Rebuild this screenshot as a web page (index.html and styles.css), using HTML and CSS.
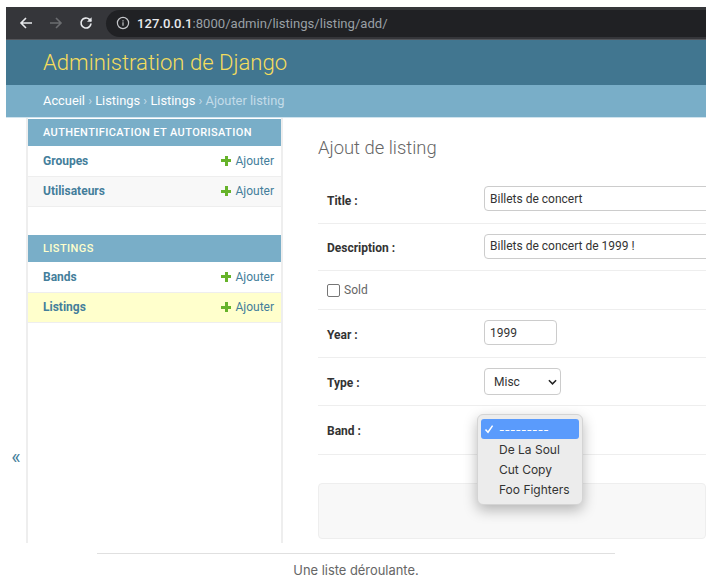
FILE: index.html
```html
<!DOCTYPE html>
<html lang="fr">
<head>
    <meta charset="UTF-8">
    <title>Ajout de listing</title>
    <link rel="stylesheet" href="styles.css">
</head>
<body>
<div class="shot">
    <div class="browser-bar">
        <svg class="nav-icon" viewBox="0 0 16 16"><path d="M14 8H3M8 3L3 8l5 5" fill="none" stroke="#e8eaed" stroke-width="1.6"/></svg>
        <svg class="nav-icon" viewBox="0 0 16 16"><path d="M2 8h11M8 3l5 5-5 5" fill="none" stroke="#6b6d70" stroke-width="1.6"/></svg>
        <svg class="nav-icon" viewBox="0 0 16 16"><path d="M13 8.5A5 5 0 1 1 11.5 4.4L13 6" fill="none" stroke="#e8eaed" stroke-width="1.7"/><path d="M13.6 2.2v4.6H9z" fill="#e8eaed"/></svg>
        <div class="url-box">
            <svg class="info-icon" viewBox="0 0 14 14"><circle cx="7" cy="7" r="5.6" fill="none" stroke="#c4c6c9" stroke-width="1.2"/><path d="M7 6.2v3.6M7 4.2v1.2" stroke="#c4c6c9" stroke-width="1.2"/></svg>
            <span class="url-host">127.0.0.1</span><span class="url-rest">:8000/admin/listings/listing/add/</span>
        </div>
    </div>

    <div class="site-header">Administration de Django</div>
    <div class="breadcrumbs">
        <a>Accueil</a> › <a>Listings</a> › <a>Listings</a> › Ajouter listing
    </div>

    <div class="page">
        <div class="toggle"><span class="toggle-mark">«</span></div>

        <div class="sidebar">
            <div class="module">
                <div class="caption">AUTHENTIFICATION ET AUTORISATION</div>
                <div class="model-row"><a class="model-name">Groupes</a><a class="add-link"><span class="plus"></span>Ajouter</a></div>
                <div class="model-row alt"><a class="model-name">Utilisateurs</a><a class="add-link"><span class="plus"></span>Ajouter</a></div>
            </div>
            <div class="module">
                <div class="caption current">LISTINGS</div>
                <div class="model-row"><a class="model-name">Bands</a><a class="add-link"><span class="plus"></span>Ajouter</a></div>
                <div class="model-row active"><a class="model-name">Listings</a><a class="add-link"><span class="plus"></span>Ajouter</a></div>
            </div>
        </div>

        <div class="content">
            <h1>Ajout de listing</h1>
            <div class="form-row text-row">
                <label>Title :</label>
                <input class="field wide" type="text" value="Billets de concert">
            </div>
            <div class="form-row text-row short">
                <label>Description :</label>
                <input class="field wide" type="text" value="Billets de concert de 1999 !">
            </div>
            <div class="form-row check-row">
                <span class="checkbox"></span><span class="check-label">Sold</span>
            </div>
            <div class="form-row text-row">
                <label>Year :</label>
                <input class="field year" type="text" value="1999">
            </div>
            <div class="form-row text-row">
                <label>Type :</label>
                <div class="field select-box">Misc
                    <svg class="chevron" viewBox="0 0 10 6"><path d="M1 1l4 4 4-4" fill="none" stroke="#222" stroke-width="1.7"/></svg>
                </div>
            </div>
            <div class="form-row text-row tall">
                <label>Band :</label>
            </div>
            <div class="submit-row"></div>
        </div>

        <div class="dropdown">
            <div class="option selected">
                <svg class="tick" viewBox="0 0 10 10"><path d="M1.5 5.5L4 8.2 8.6 1.6" fill="none" stroke="#fff" stroke-width="1.5"/></svg>
                ---------
            </div>
            <div class="option">De La Soul</div>
            <div class="option">Cut Copy</div>
            <div class="option">Foo Fighters</div>
        </div>
    </div>
</div>

<div class="figure-caption">Une liste déroulante.</div>
</body>
</html>
```

FILE: styles.css
```css
body {
    margin: 0;
    background: #fff;
    font-family: Roboto, "Liberation Sans", sans-serif;
    color: #333;
}

.shot {
    width: 700px;
    margin: 7px 0 0 6px;
    overflow: hidden;
}

/* browser chrome */
.browser-bar {
    display: flex;
    align-items: center;
    height: 33px;
    padding-left: 12px;
    box-sizing: border-box;
    background: #35363a;
    border-bottom: 1px solid #55565a;
}
.nav-icon {
    width: 16px;
    height: 16px;
    margin-right: 14px;
}
.url-box {
    display: flex;
    align-items: center;
    flex: 1;
    height: 27px;
    margin-left: -2px;
    padding-left: 10px;
    background: #202124;
    border-radius: 14px 0 0 14px;
    font-size: 13.1px;
    font-weight: 500;
}
.info-icon {
    width: 14px;
    height: 14px;
    margin-right: 7px;
}
.url-host {
    color: #e8eaed;
}
.url-rest {
    color: #9aa0a6;
    font-weight: 400;
}

/* django header */
.site-header {
    height: 45px;
    padding-left: 37px;
    background: #417690;
    color: #f5dd5d;
    font-size: 22.1px;
    font-weight: 300;
    line-height: 45px;
}
.breadcrumbs {
    height: 33px;
    padding-left: 37px;
    background: #79aec8;
    border-bottom: 1px solid #cfe3ee;
    color: #c4dce8;
    font-size: 12.85px;
    line-height: 32px;
    box-sizing: border-box;
}
.breadcrumbs a {
    color: #fff;
}

.page {
    position: relative;
    display: flex;
    height: 425px;
}
.toggle {
    display: flex;
    align-items: center;
    width: 20px;
    padding-top: 252px;
    box-sizing: border-box;
    justify-content: center;
    color: #447e9b;
}
.toggle-mark {
    font-size: 20px;
    line-height: 20px;
}

/* sidebar */
.sidebar {
    width: 253px;
    flex-shrink: 0;
    padding-top: 1px;
    border-left: 2px solid #eee;
    border-right: 2px solid #eee;
}
.module {
    margin-bottom: 28px;
}
.caption {
    height: 27px;
    padding-left: 15px;
    background: #79aec8;
    color: #fff;
    font-size: 11px;
    font-weight: 500;
    letter-spacing: 0.4px;
    line-height: 27px;
    box-sizing: border-box;
}
.caption.current {
    color: #ffc;
}
.model-row {
    display: flex;
    justify-content: space-between;
    align-items: center;
    height: 30.5px;
    padding: 0 7px 0 15px;
    border-bottom: 1px solid #eee;
    box-sizing: border-box;
    font-size: 12px;
}
.model-row.alt {
    background: #f8f8f8;
}
.model-row.active {
    background: #ffc;
}
.model-name {
    color: #447e9b;
    font-weight: 700;
}
.add-link {
    display: flex;
    align-items: center;
    color: #447e9b;
    font-weight: 400;
}
.plus {
    width: 10px;
    height: 10px;
    margin-right: 4px;
    background:
        linear-gradient(#66b32a, #66b32a) center / 10px 3px no-repeat,
        linear-gradient(#66b32a, #66b32a) center / 3px 10px no-repeat;
}

/* main form */
.content {
    flex: 1;
    min-width: 0;
    padding: 19px 0 0 35px;
}
h1 {
    margin: 0 0 17px;
    color: #666;
    font-size: 18.4px;
    font-weight: 300;
    line-height: 22px;
}
.form-row {
    display: flex;
    align-items: center;
    padding-left: 9px;
    border-bottom: 1px solid #eee;
    font-size: 12px;
    box-sizing: border-box;
}
.text-row {
    height: 48px;
}
.text-row.short {
    height: 47px;
}
.text-row.tall {
    height: 49px;
}
.form-row label {
    width: 157px;
    flex-shrink: 0;
    padding-top: 2px;
    color: #333;
    font-weight: 700;
}
.check-row {
    height: 39px;
}
.checkbox {
    width: 11px;
    height: 11px;
    margin-right: 4px;
    background: #fff;
    border: 1px solid #767676;
    border-radius: 2px;
}
.check-label {
    color: #666;
}
.field {
    height: 25px;
    padding: 0 5px;
    margin: -2px 0 0;
    background: #fff;
    border: 1px solid #ccc;
    border-radius: 4px;
    box-sizing: border-box;
    color: #333;
    font-family: Roboto, "Liberation Sans", sans-serif;
    font-size: 12px;
}
.wide {
    width: 300px;
    flex-shrink: 0;
}
.year {
    width: 73px;
}
.select-box {
    display: flex;
    align-items: center;
    justify-content: space-between;
    width: 77px;
    height: 27px;
    margin: 0;
    padding: 0 3px 0 9px;
}
.chevron {
    width: 9px;
    height: 6px;
}
.submit-row {
    height: 56px;
    margin-top: 28px;
    background: #f8f8f8;
    border: 1px solid #eee;
    border-radius: 4px;
    box-sizing: border-box;
}

/* open select list, lies over the form */
.dropdown {
    position: absolute;
    left: 471px;
    top: 296px;
    width: 106px;
    height: 91px;
    padding: 4px 3px;
    box-sizing: border-box;
    background: #ececec;
    border: 1px solid #d4d4d4;
    border-radius: 6px;
    box-shadow: 0 5px 14px rgba(0, 0, 0, 0.28);
    font-family: Inter, "Liberation Sans", sans-serif;
    font-size: 12px;
}
.option {
    position: relative;
    height: 20px;
    padding-left: 18px;
    color: #333;
    line-height: 21px;
    border-radius: 3px;
}
.option.selected {
    background: #5a9bfc;
    color: #fff;
}
.tick {
    position: absolute;
    left: 3px;
    top: 5px;
    width: 10px;
    height: 10px;
}

/* figure caption below the screenshot */
.figure-caption {
    width: 518px;
    margin: 10px 0 0 97px;
    padding-top: 9px;
    border-top: 1px solid #e0e0e0;
    color: #666;
    font-family: Inter, "Liberation Sans", sans-serif;
    font-size: 12.9px;
    line-height: 16px;
    text-align: center;
}
```
